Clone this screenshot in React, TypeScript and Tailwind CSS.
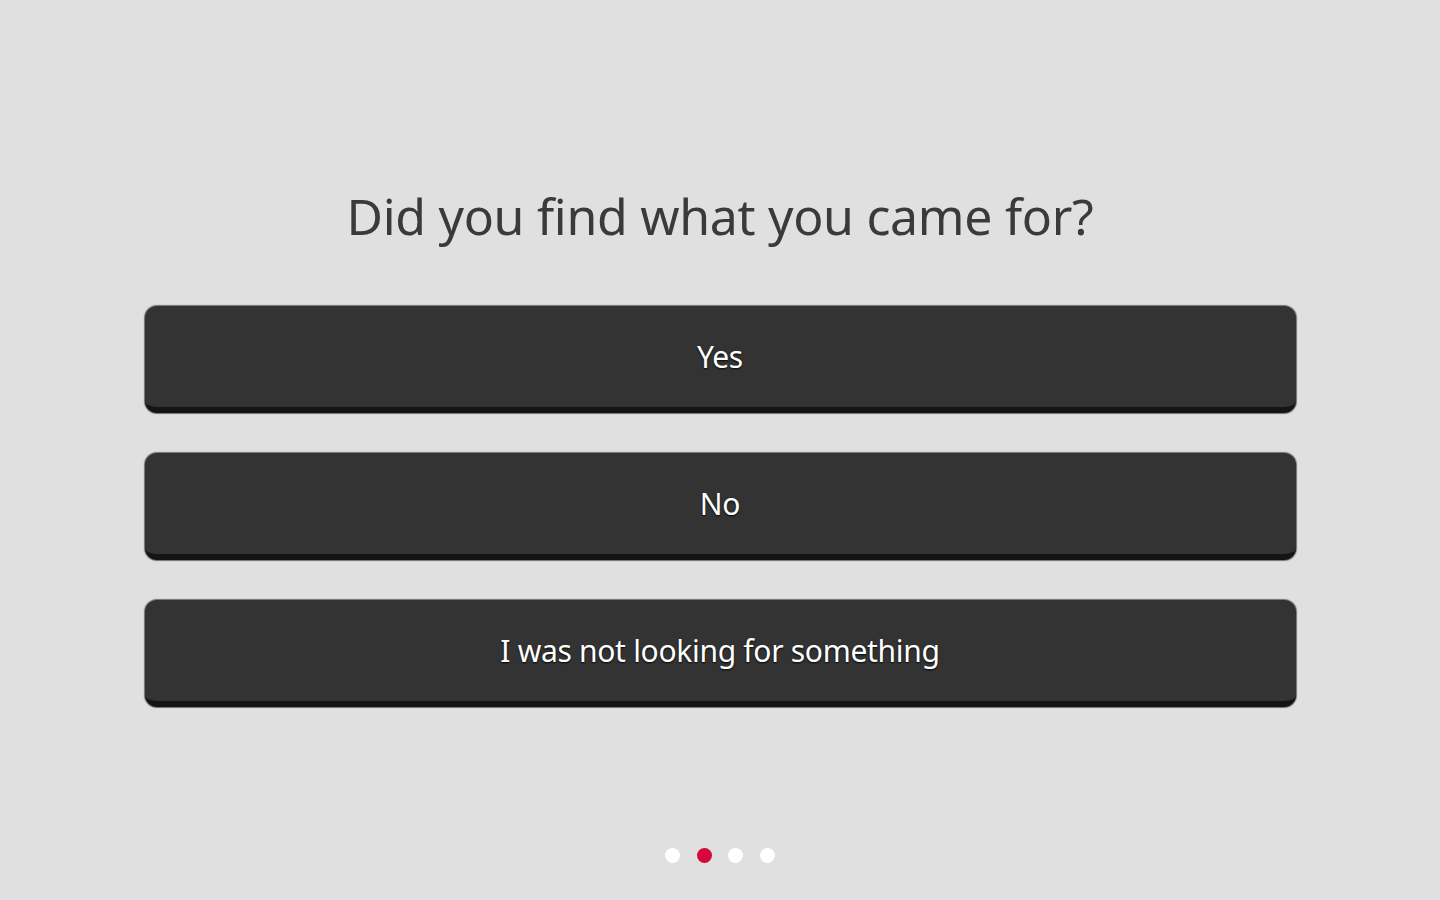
export default function App() {
  const options = ["Yes", "No", "I was not looking for something"];
  return (
    <div className="w-[1440px] h-[900px] bg-[#e0e0e0] flex flex-col items-center" style={{ fontFamily: '"Noto Sans", "Open Sans", sans-serif' }}>
      <h1 className="mt-[184px] h-[64px] flex items-center text-[50px] leading-none text-[#3a3a3a] tracking-[-0.3px]">
        Did you find what you came for?
      </h1>
      <div className="mt-[58px] w-[1151px] flex flex-col gap-[40px]">
        {options.map((o) => (
          <button
            key={o}
            className="h-[107px] w-full rounded-[12px] bg-[#333333] border-b-[6px] border-[#141414] shadow-[0_0_1px_1px_rgba(0,0,0,0.5)] flex items-center justify-center text-white text-[30px] tracking-[-0.3px] [text-shadow:0_1px_2px_rgba(0,0,0,0.9)]"
          >
            {o}
          </button>
        ))}
      </div>
      <div className="mt-[141px] flex items-center gap-[16.5px]">
        <span className="w-[15px] h-[15px] rounded-full bg-white" />
        <span className="w-[15px] h-[15px] rounded-full bg-[#d4083c]" />
        <span className="w-[15px] h-[15px] rounded-full bg-white" />
        <span className="w-[15px] h-[15px] rounded-full bg-white" />
      </div>
    </div>
  );
}
